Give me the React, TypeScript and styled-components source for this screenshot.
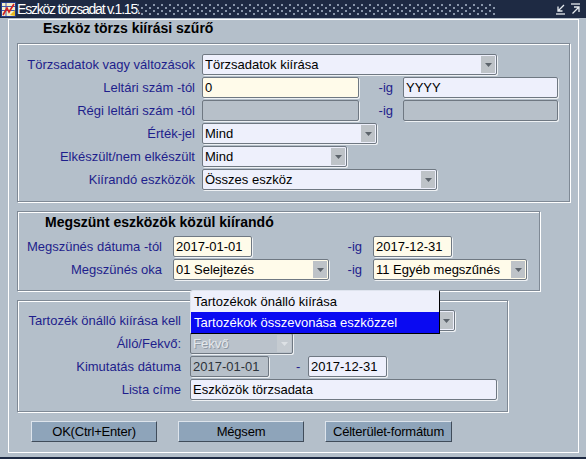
import React from 'react';
import styled, { createGlobalStyle } from 'styled-components';

const GlobalStyle = createGlobalStyle`
  html, body { margin: 0; padding: 0; background: #b4bfca; }
  body { font-family: "Liberation Sans", Arial, sans-serif; }
  * { box-sizing: border-box; }
`;

const Window = styled.div`
  width: 586px;
  height: 459px;
  background: #b4bfca;
  display: flex;
  flex-direction: column;
  overflow: hidden;
  border-bottom: 2px solid #1e2a43;
`;

const TitleBar = styled.div`
  height: 18px;
  flex: none;
  background: #1e2a43;
  display: flex;
  align-items: center;
`;

const AppIcon = styled.svg`
  margin-left: 1px;
  flex: none;
`;

const TitleText = styled.span`
  width: 120px;
  margin-left: 1px;
  color: #ffffff;
  font-size: 14px;
  letter-spacing: -1.2px;
  white-space: nowrap;
  line-height: 18px;
  flex: none;
`;

const Dots = styled.div`
  width: 358px;
  height: 12px;
  flex: none;
  background-image:
    radial-gradient(circle at 1px 1px, #8996aa 0.8px, transparent 1.2px),
    radial-gradient(circle at 1px 1px, #8996aa 0.8px, transparent 1.2px);
  background-size: 8px 6px, 8px 6px;
  background-position: 0 1px, 4px 4px;
`;

const Spacer = styled.div`
  flex: 1;
`;

const WinControls = styled.div`
  display: flex;
  gap: 5px;
  margin-right: 5px;
  align-items: center;
`;

const Body = styled.div`
  padding: 1px 0 0 8px;
`;

const Frame = styled.div`
  width: 571px;
  height: 434px;
  border: 1px solid #ffffff;
  padding: 0 0 0 8px;
  display: flex;
  flex-direction: column;
  align-items: flex-start;
`;

const SectionTitle = styled.div`
  height: 23px;
  padding-left: 26px;
  font-size: 14px;
  font-weight: bold;
  line-height: 16px;
  color: #000;
  white-space: nowrap;
`;

const GroupBox = styled.div<{ $w: number; $h: number; $pt: number; $mt?: number }>`
  width: ${p => p.$w}px;
  height: ${p => p.$h}px;
  margin-top: ${p => p.$mt ?? 0}px;
  border: 1px solid #7f8995;
  box-shadow: inset 1px 1px 0 #ffffff, 1px 1px 0 #ffffff;
  padding-top: ${p => p.$pt}px;
  display: flex;
  flex-direction: column;
  gap: 2px;
  flex: none;
`;

const GroupTitle = styled.div`
  padding-left: 27px;
  font-size: 14px;
  font-weight: bold;
  line-height: 16px;
  color: #000;
  margin-bottom: 4px;
  white-space: nowrap;
`;

const Row = styled.div`
  display: flex;
  align-items: center;
  height: 21px;
`;

const Label = styled.div<{ $w: number; $gap: number }>`
  width: ${p => p.$w}px;
  margin-right: ${p => p.$gap}px;
  text-align: right;
  color: #1e1e8c;
  font-size: 13px;
  white-space: nowrap;
  flex: none;
`;

const SideLabel = styled.div<{ $w: number; $pl?: number; $pr?: number }>`
  width: ${p => p.$w}px;
  padding-left: ${p => p.$pl ?? 0}px;
  padding-right: ${p => p.$pr ?? 0}px;
  text-align: ${p => (p.$pl ? 'left' : 'right')};
  color: #1e1e8c;
  font-size: 13px;
  flex: none;
`;

const Cell = styled.div<{ $w: number }>`
  width: ${p => p.$w}px;
  flex: none;
  display: flex;
`;

const Field = styled.div<{ $w: number; $bg: string; $fg?: string }>`
  position: relative;
  width: ${p => p.$w}px;
  height: 21px;
  flex: none;
  border: 1px solid #6f7882;
  border-radius: 2px;
  box-shadow: 1px 1px 0 #eef1f4;
  background: ${p => p.$bg};
  color: ${p => p.$fg ?? '#000'};
  font-size: 13px;
  display: flex;
  align-items: center;
  padding-left: 2px;
`;

const FieldText = styled.span<{ $emboss?: boolean }>`
  flex: 1;
  white-space: nowrap;
  overflow: hidden;
  ${p => (p.$emboss ? 'text-shadow: 1px 1px 0 #8e98a3;' : '')}
`;

const ArrowBtn = styled.div<{ $disabled?: boolean }>`
  width: 14px;
  height: 17px;
  margin-right: 1px;
  flex: none;
  background: ${p => (p.$disabled ? '#c5cbd1' : '#bec3c8')};
  display: flex;
  align-items: center;
  justify-content: center;
`;

const Popup = styled.div`
  position: absolute;
  left: -1px;
  top: -21px;
  width: 250px;
  border: 1px solid;
  border-color: #dfe4ee #000 #000 #dfe4ee;
  border-radius: 3px 2px 0 0;
  background: #eef0fb;
  z-index: 2;
  display: flex;
  flex-direction: column;
`;

const PopupItem = styled.div<{ $selected?: boolean }>`
  height: 21px;
  line-height: 21px;
  padding-left: 3px;
  font-size: 13px;
  color: ${p => (p.$selected ? '#fff' : '#000')};
  background: ${p => (p.$selected ? '#0a0af2' : 'transparent')};
  white-space: nowrap;
`;

const ButtonRow = styled.div`
  display: flex;
  gap: 21px;
  margin: 9px 0 0 14px;
`;

const Button = styled.button<{ $w: number }>`
  width: ${p => p.$w}px;
  height: 21px;
  padding: 0;
  background: #8ea4ba;
  border: 1px solid;
  border-color: #dde4ec #404c5a #404c5a #dde4ec;
  font-family: "Liberation Sans", Arial, sans-serif;
  font-size: 13px;
  font-weight: normal;
  letter-spacing: -0.2px;
  color: #000;
`;

const Arrow: React.FC<{ color?: string }> = ({ color = '#5c636b' }) => (
  <svg width="7" height="4" viewBox="0 0 7 4">
    <path d="M0 0 H7 L3.5 4 Z" fill={color} />
  </svg>
);

type SelectProps = { w: number; bg: string; text: string; disabled?: boolean; fg?: string; children?: React.ReactNode };
const Select: React.FC<SelectProps> = ({ w, bg, text, disabled, fg, children }) => (
  <Field $w={w} $bg={bg} $fg={fg}>
    <FieldText $emboss={disabled}>{text}</FieldText>
    <ArrowBtn $disabled={disabled}>
      <Arrow color={disabled ? '#dde1e5' : '#5c636b'} />
    </ArrowBtn>
    {children}
  </Field>
);

const CREAM = '#fffbea';
const LAV = '#eef0fc';
const GREY = '#b7c0c9';

export default function App() {
  return (
    <>
      <GlobalStyle />
      <Window>
        <TitleBar>
          <AppIcon width="15" height="15" viewBox="0 0 15 15">
            <rect x="0.5" y="0.5" width="14" height="14" fill="#f6f0c8" stroke="#243c8c" />
            <path d="M1 4.5 H14 M1 8.5 H14 M5 1 V14" stroke="#3f5bb0" strokeWidth="1" />
            <path d="M2 13 L6 6 L8 10 L13 2" stroke="#d42020" strokeWidth="1.6" fill="none" />
            <path d="M9 13 L14 8 V14 Z" fill="#e8b820" />
          </AppIcon>
          <TitleText>Eszköz törzsadat v.1.15.</TitleText>
          <Dots />
          <Spacer />
          <WinControls>
            <svg width="10" height="12" viewBox="0 0 10 12">
              <path d="M8 2 L2.5 7.5 M2 3.5 V8 H6.5" stroke="#e6ebf0" strokeWidth="1.3" fill="none" />
              <path d="M0 11 H9" stroke="#e6ebf0" strokeWidth="1.3" />
            </svg>
            <svg width="10" height="12" viewBox="0 0 10 12">
              <path d="M0 1 H9" stroke="#e6ebf0" strokeWidth="1.3" />
              <path d="M1.5 10.5 L7.5 4.5 M3 4 H8 V9" stroke="#e6ebf0" strokeWidth="1.3" fill="none" />
            </svg>
          </WinControls>
        </TitleBar>
        <Body>
          <Frame>
            <SectionTitle>Eszköz törzs kiírási szűrő</SectionTitle>
            <GroupBox $w={553} $h={159} $pt={10}>
              <Row>
                <Label $w={177} $gap={7}>Törzsadatok vagy változások</Label>
                <Select w={295} bg={LAV} text="Törzsadatok kiírása" />
              </Row>
              <Row>
                <Label $w={177} $gap={7}>Leltári szám -tól</Label>
                <Field $w={157} $bg={CREAM}><FieldText>0</FieldText></Field>
                <SideLabel $w={44} $pr={10}>-ig</SideLabel>
                <Field $w={155} $bg={LAV}><FieldText>YYYY</FieldText></Field>
              </Row>
              <Row>
                <Label $w={177} $gap={7}>Régi leltári szám -tól</Label>
                <Field $w={157} $bg={GREY} />
                <SideLabel $w={44} $pr={10}>-ig</SideLabel>
                <Field $w={155} $bg={GREY} />
              </Row>
              <Row>
                <Label $w={177} $gap={7}>Érték-jel</Label>
                <Select w={175} bg={LAV} text="Mind" />
              </Row>
              <Row>
                <Label $w={177} $gap={7}>Elkészült/nem elkészült</Label>
                <Select w={145} bg={LAV} text="Mind" />
              </Row>
              <Row>
                <Label $w={177} $gap={7}>Kiírandó eszközök</Label>
                <Select w={235} bg={LAV} text="Összes eszköz" />
              </Row>
            </GroupBox>

            <GroupBox $w={523} $h={80} $pt={2} $mt={9}>
              <GroupTitle>Megszünt eszközök közül kiírandó</GroupTitle>
              <Row>
                <Label $w={144} $gap={11}>Megszünés dátuma -tól</Label>
                <Cell $w={156}>
                  <Field $w={79} $bg={CREAM}><FieldText>2017-01-01</FieldText></Field>
                </Cell>
                <SideLabel $w={44} $pr={11}>-ig</SideLabel>
                <Field $w={79} $bg={CREAM}><FieldText>2017-12-31</FieldText></Field>
              </Row>
              <Row>
                <Label $w={144} $gap={11}>Megszünés oka</Label>
                <Cell $w={156}>
                  <Select w={156} bg={CREAM} text="01 Selejtezés" />
                </Cell>
                <SideLabel $w={44} $pr={11}>-ig</SideLabel>
                <Select w={154} bg={CREAM} text="11 Egyéb megszűnés" />
              </Row>
            </GroupBox>

            <GroupBox $w={491} $h={112} $pt={9} $mt={9}>
              <Row>
                <Label $w={163} $gap={9}>Tartozék önálló kiírása kell</Label>
                <Select w={265} bg={LAV} text="">
                  <Popup>
                    <PopupItem>Tartozékok önálló kiírása</PopupItem>
                    <PopupItem $selected>Tartozékok összevonása eszközzel</PopupItem>
                  </Popup>
                </Select>
              </Row>
              <Row>
                <Label $w={163} $gap={9}>Álló/Fekvő:</Label>
                <Select w={103} bg="#bac2cb" fg="#e4e8ec" text="Fekvő" disabled />
              </Row>
              <Row>
                <Label $w={163} $gap={9}>Kimutatás dátuma</Label>
                <Field $w={79} $bg={GREY} $fg="#2c333b"><FieldText>2017-01-01</FieldText></Field>
                <SideLabel $w={39} $pl={27}>-</SideLabel>
                <Field $w={79} $bg={LAV}><FieldText>2017-12-31</FieldText></Field>
              </Row>
              <Row>
                <Label $w={163} $gap={9}>Lista címe</Label>
                <Field $w={307} $bg={LAV}><FieldText>Eszközök törzsadata</FieldText></Field>
              </Row>
            </GroupBox>

            <ButtonRow>
              <Button $w={126}>OK(Ctrl+Enter)</Button>
              <Button $w={126}>Mégsem</Button>
              <Button $w={127}>Célterület-formátum</Button>
            </ButtonRow>
          </Frame>
        </Body>
      </Window>
    </>
  );
}
